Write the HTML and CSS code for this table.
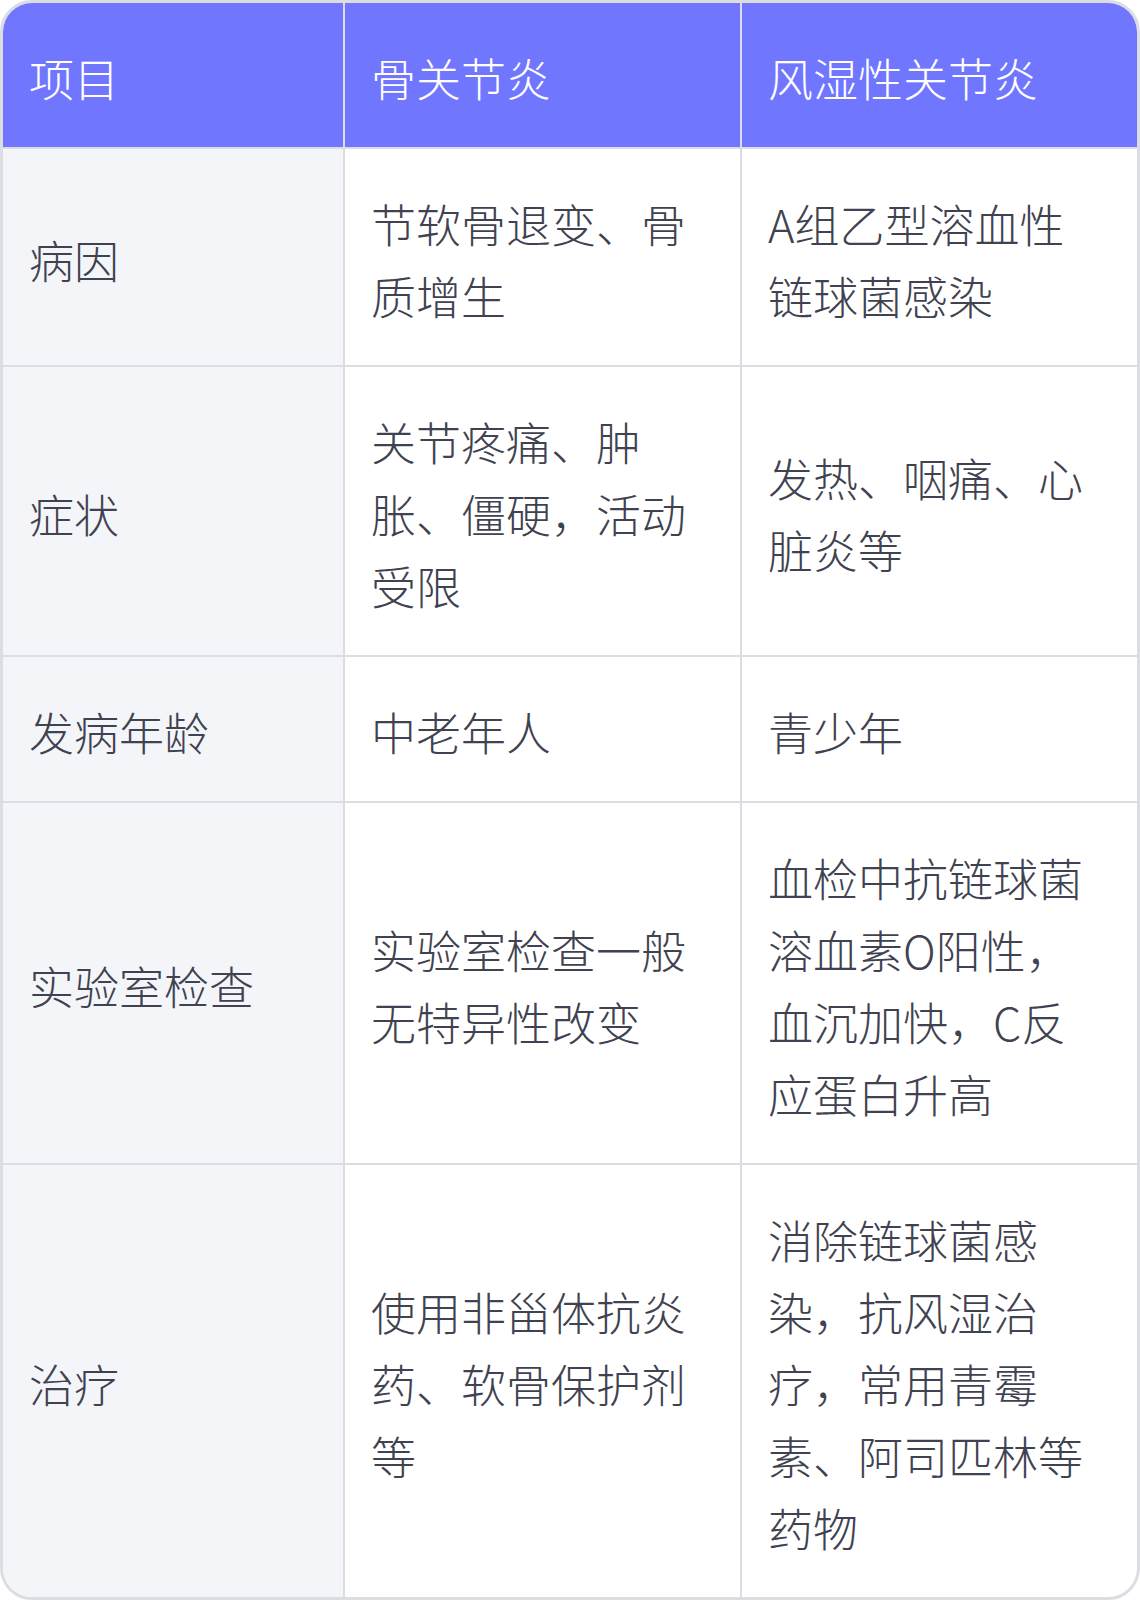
FILE: index.html
```html
<!DOCTYPE html>
<html lang="zh-CN">
<head>
<meta charset="utf-8">
<title>骨关节炎与风湿性关节炎对比</title>
<link rel="stylesheet" href="styles.css">
</head>
<body>
<div class="card">
  <table class="cmp">
    <colgroup>
      <col class="c1">
      <col class="c2">
      <col class="c3">
    </colgroup>
    <thead>
      <tr>
        <th>项目</th>
        <th>骨关节炎</th>
        <th>风湿性关节炎</th>
      </tr>
    </thead>
    <tbody>
      <tr>
        <td>病因</td>
        <td>节软骨退变、骨质增生</td>
        <td>A组乙型溶血性链球菌感染</td>
      </tr>
      <tr>
        <td>症状</td>
        <td>关节疼痛、肿胀、僵硬，活动受限</td>
        <td>发热、咽痛、心脏炎等</td>
      </tr>
      <tr>
        <td>发病年龄</td>
        <td>中老年人</td>
        <td>青少年</td>
      </tr>
      <tr>
        <td>实验室检查</td>
        <td>实验室检查一般无特异性改变</td>
        <td>血检中抗链球菌溶血素O阳性，血沉加快，C反应蛋白升高</td>
      </tr>
      <tr>
        <td>治疗</td>
        <td>使用非甾体抗炎药、软骨保护剂等</td>
        <td>消除链球菌感染，抗风湿治疗，常用青霉素、阿司匹林等药物</td>
      </tr>
    </tbody>
  </table>
</div>
</body>
</html>
```

FILE: styles.css
```css
html, body {
  margin: 0;
  padding: 0;
  background: #ffffff;
}

.card {
  width: 1140px;
  box-sizing: border-box;
  border: 3px solid #dcdde3;
  border-radius: 32px;
  overflow: hidden;
  background: #ffffff;
}

.cmp {
  width: 100%;
  border-collapse: separate;
  border-spacing: 0;
  table-layout: fixed;
  font-family: "Noto Sans CJK SC", "Noto Sans", sans-serif;
  font-size: 45px;
  font-weight: 300;
  line-height: 72px;
  color: #3f4250;
}

.c1 { width: 342px; }
.c2 { width: 397px; }
.c3 { width: 395px; }

.cmp th,
.cmp td {
  padding: 39px 28px 33px 26px;
  text-align: left;
  vertical-align: middle;
  border-right: 2px solid #dcdde3;
  border-bottom: 2px solid #dcdde3;
  word-break: break-all;
}

.cmp th:last-child,
.cmp td:last-child {
  border-right: none;
  padding-right: 44px;
}

.cmp tbody tr:last-child td {
  border-bottom: none;
}

.cmp th {
  background: #7176ff;
  color: #ffffff;
  font-weight: 300;
}

.cmp td:first-child {
  background: #f4f5f9;
}
```
